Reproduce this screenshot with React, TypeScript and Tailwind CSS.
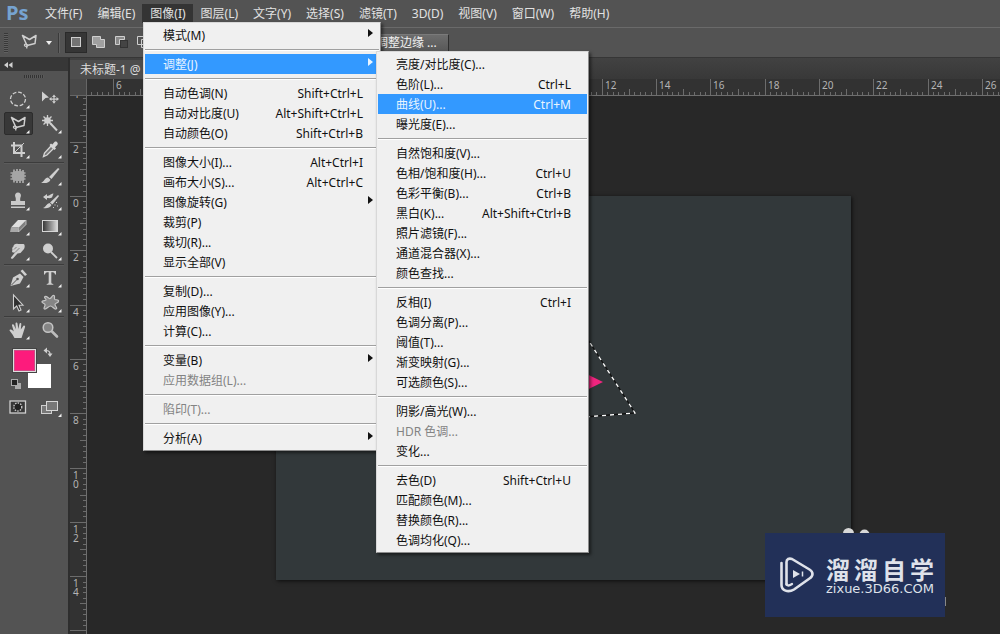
import React from "react";

type Entry =
  | { kind: "sep" }
  | { kind: "item"; label: string; keys?: string; sub?: boolean; active?: boolean; disabled?: boolean };

const sep: Entry = { kind: "sep" };
const item = (label: string, extra: Partial<Omit<Extract<Entry, { kind: "item" }>, "kind">> = {}): Entry => ({
  kind: "item",
  label,
  ...extra,
});

const imageMenu: Entry[] = [
  item("模式(M)", { sub: true }),
  sep,
  item("调整(J)", { sub: true, active: true }),
  sep,
  item("自动色调(N)", { keys: "Shift+Ctrl+L" }),
  item("自动对比度(U)", { keys: "Alt+Shift+Ctrl+L" }),
  item("自动颜色(O)", { keys: "Shift+Ctrl+B" }),
  sep,
  item("图像大小(I)...", { keys: "Alt+Ctrl+I" }),
  item("画布大小(S)...", { keys: "Alt+Ctrl+C" }),
  item("图像旋转(G)", { sub: true }),
  item("裁剪(P)"),
  item("裁切(R)..."),
  item("显示全部(V)"),
  sep,
  item("复制(D)..."),
  item("应用图像(Y)..."),
  item("计算(C)..."),
  sep,
  item("变量(B)", { sub: true }),
  item("应用数据组(L)...", { disabled: true }),
  sep,
  item("陷印(T)...", { disabled: true }),
  sep,
  item("分析(A)", { sub: true }),
];

const adjustMenu: Entry[] = [
  item("亮度/对比度(C)..."),
  item("色阶(L)...", { keys: "Ctrl+L" }),
  item("曲线(U)...", { keys: "Ctrl+M", active: true }),
  item("曝光度(E)..."),
  sep,
  item("自然饱和度(V)..."),
  item("色相/饱和度(H)...", { keys: "Ctrl+U" }),
  item("色彩平衡(B)...", { keys: "Ctrl+B" }),
  item("黑白(K)...", { keys: "Alt+Shift+Ctrl+B" }),
  item("照片滤镜(F)..."),
  item("通道混合器(X)..."),
  item("颜色查找..."),
  sep,
  item("反相(I)", { keys: "Ctrl+I" }),
  item("色调分离(P)..."),
  item("阈值(T)..."),
  item("渐变映射(G)..."),
  item("可选颜色(S)..."),
  sep,
  item("阴影/高光(W)..."),
  item("HDR 色调...", { disabled: true }),
  item("变化..."),
  sep,
  item("去色(D)", { keys: "Shift+Ctrl+U" }),
  item("匹配颜色(M)..."),
  item("替换颜色(R)..."),
  item("色调均化(Q)..."),
];

const topMenus = [
  "文件(F)", "编辑(E)", "图像(I)", "图层(L)", "文字(Y)", "选择(S)",
  "滤镜(T)", "3D(D)", "视图(V)", "窗口(W)", "帮助(H)",
];

function DropMenu({ entries, label, className }: { entries: Entry[]; label: string; className: string }) {
  return (
    <div
      role="menu"
      aria-label={label}
      className={`absolute flex flex-col border border-[#8c8c8c] border-t-[#d8d8d8] border-l-[#d8d8d8] bg-[#f0f0f0] px-px py-0.5 shadow-[2px_2px_3px_rgba(0,0,0,0.5)] ${className}`}
    >
      {entries.map((e, i) =>
        e.kind === "sep" ? (
          <div key={i} role="separator" className="flex h-[9px] items-center">
            <div className="h-0.5 w-full border-t border-[#a0a0a0] bg-white" />
          </div>
        ) : (
          <button
            key={i}
            role="menuitem"
            disabled={e.disabled}
            className={`flex h-5 shrink-0 items-center justify-between pt-0.5 pr-4 pl-[18px] text-left whitespace-nowrap ${
              e.active ? "bg-[#3399ff] text-[#e8f4ff]" : e.disabled ? "text-[#838383]" : "text-[#111111]"
            }`}
          >
            <span>{e.label}</span>
            {e.keys && <span>{e.keys}</span>}
            {e.sub && (
              <svg width="5" height="8" viewBox="0 0 5 8" className="-mr-2.5 mb-1.5" fill="currentColor">
                <path d="M0 0L5 4L0 8Z" />
              </svg>
            )}
          </button>
        ),
      )}
    </div>
  );
}

const LassoShape = () => (
  <g fill="none" stroke="#cfcfcf" strokeWidth="1.5" strokeLinejoin="round">
    <path d="M9.5 5.5L16.5 9.5L23 5.5L22 13.5L14 15.5Z" />
    <path d="M14 14.5C11.5 13 10.5 15.5 12.5 16.2C14.5 17 15.5 15 14 14.5M13.5 16.5L14 18.5" strokeWidth="1.2" />
  </g>
);

const icons: Record<string, React.ReactNode> = {
  marquee: <ellipse cx="16" cy="12" rx="7.5" ry="6.8" fill="none" stroke="#cfcfcf" strokeWidth="1.3" strokeDasharray="3.8 1.8" />,
  move: (
    <g fill="#cfcfcf">
      <path d="M8 4.500L15 10.500L11.500 11L8 14.500Z" />
      <path d="M20 7.500l2 2.500h-1.400v1.500h1.900v-1.400l2.500 2l-2.500 2v-1.400h-1.900v1.500h1.400l-2 2.500l-2-2.500h1.400v-1.500h-1.900v1.400l-2.500-2l2.500-2v1.400h1.900v-1.500h-1.400z" />
    </g>
  ),
  lasso: <LassoShape />,
  wand: (
    <g stroke="#cfcfcf">
      <path d="M13.500 3v11M8 8.500h11M9.500 4.500l8 8M17.500 4.500l-8 8" strokeWidth="1.300" />
      <circle cx="13.500" cy="8.500" r="3.300" fill="#cfcfcf" stroke="none" />
      <path d="M16 11L23 18.500" strokeWidth="2" />
    </g>
  ),
  crop: (
    <g fill="none" stroke="#cfcfcf" strokeWidth="2">
      <path d="M12 5v11h11M9 8.500h10.500V20" />
      <path d="M13 15L22 6" strokeWidth="1" />
    </g>
  ),
  dropper: (
    <g>
      <path d="M9.500 19.500L10.500 16L17 9L19.500 11.500L13 18Z" fill="#777" stroke="#d6d6d6" strokeWidth="1.300" />
      <path d="M15.500 8L17 6.500L18.300 7.500L20.500 5C22 3.500 25 6 23.300 8L21 10.300L22 11.500L20.500 13Z" fill="#d6d6d6" />
    </g>
  ),
  patch: (
    <g>
      <path d="M12 5.500v13M15 5v14M18 5v14M21 6v13M8.500 9h15M8.500 12h15.500M8.500 15h15" stroke="#cfcfcf" strokeWidth="1.200" />
      <rect x="10" y="7" width="12.500" height="10" rx="4" fill="#a5a5a5" />
    </g>
  ),
  brush: (
    <g fill="#cfcfcf">
      <path d="M24 4L25.500 5L17.500 15L15 13Z" />
      <path d="M14 13.500L16.500 15.700C15.500 19 11.500 19.500 7 18.800C10.500 17.500 10.500 14 14 13.500Z" />
    </g>
  ),
  stamp: (
    <path d="M16 3.500a3 3 0 0 1 2.800 4c-.6 1.500-.8 2.500-.5 4.500H23v4H9v-4h4.700c.3-2 .1-3-.5-4.500A3 3 0 0 1 16 3.500ZM9 17.500h14v1.500H9z" fill="#c9c9c9" />
  ),
  history: (
    <g fill="#cfcfcf">
      <path d="M24 6L25 7L18.500 15.500L16 13.500Z" />
      <path d="M15.500 14L17.500 16C16 19.500 12 19.500 9 19C12.500 17.500 12 15 15.500 14Z" />
      <path d="M9 8L13 5V7C16 6.500 17.500 4.500 19.500 4.500L18 8.500C16 9.500 14.500 9 13 9V11Z" />
      <path d="M22 13h1v1h-1zM20.500 15.500h1v1h-1zM23 16.500h1v1h-1zM19 18h1v1h-1z" />
    </g>
  ),
  eraser: (
    <g>
      <path d="M9 13.500L16 6H24L17 13.500Z" fill="#dedede" />
      <path d="M16.500 13.500L24 6V10.500L16.500 18Z" fill="#808080" stroke="#cfcfcf" strokeWidth="0.800" />
      <path d="M9 13.500H17L16 18H8Z" fill="#a8a8a8" />
    </g>
  ),
  gradient: <rect x="8.500" y="6.500" width="15" height="11" fill="url(#toolGrad)" stroke="#d6d6d6" />,
  smudge: (
    <g>
      <path d="M9 18.500L13 13.500C10 14 9.500 12.500 10.500 11C9.800 9.500 10.500 8 11.500 7.500C11.500 5.500 13.500 4.500 16 5H21.500C23 5.500 23 8 22 10L18.500 14L15.500 14.500L11 19.500C10 20 8.500 19.500 9 18.500Z" fill="#cfcfcf" />
      <path d="M13 13.500L17.500 9M12 10.500L14.500 8" stroke="#777" strokeWidth="0.900" />
    </g>
  ),
  dodge: (
    <g>
      <circle cx="14" cy="9.500" r="5" fill="#cfcfcf" />
      <path d="M17 13L23 19" stroke="#cfcfcf" strokeWidth="1.800" />
    </g>
  ),
  pen: (
    <g>
      <path d="M8.500 19.500L11 11.500L18 7.500L21.500 11L18 17.500L9.500 19.800Z" fill="#cfcfcf" />
      <path d="M18.500 5L20.500 3.500L25 8.500L23 10Z" fill="#cfcfcf" />
      <path d="M9.500 19L15 13.500" stroke="#555" />
      <circle cx="15.500" cy="13" r="1.300" fill="#555" />
    </g>
  ),
  type: <path d="M10 5H22V8.500H21C20.700 6.800 20 6.300 17.300 6.300V16C17.300 17.500 17.800 17.700 19.300 17.900V18.800H12.700V17.900C14.200 17.700 14.700 17.500 14.700 16V6.300C12 6.300 11.300 6.800 11 8.500H10Z" fill="#cfcfcf" />,
  arrow: <path d="M11.500 4V18L14.700 15L17 20L19 19L17 14.200H21Z" fill="#2f2f2f" stroke="#cfcfcf" strokeWidth="1.100" />,
  shape: <path d="M11 5.500C13 4.500 14.500 8 16 7.500C17.500 7 18 4 20 4.500C21.500 5 19.500 8 21 8.500C23 9 25 8.500 24.500 10.500C24 12 21 12 21 13.500C21 15 24 17.500 22 18C20 18.500 18.500 15 16.500 15C14.500 15 12.500 18.500 10.500 18C9 17.500 11.500 15 11 13.500C10.500 12 7.500 12.500 8 10.500C8.500 9 11.500 10 12 9C12.300 8 9.500 6.500 11 5.500Z" fill="#858585" stroke="#c6c6c6" strokeWidth="1.200" />,
  hand: (
    <path d="M12.500 20L10.500 16.500L7.500 12.500C7.500 11 9.500 11.300 11.800 13.500L10 7.500C9.800 6 11.500 5.700 12 7L13.800 11.200L13.500 5.500C13.500 4 15.300 4 15.500 5.500L16.300 11L17.500 5.700C17.800 4.400 19.500 4.700 19.300 6.200L18.800 11.500L21.300 8C22.300 7 23.500 8 23 9.200L21 15.500L19.500 20Z" fill="#cfcfcf" />
  ),
  zoom: (
    <g>
      <circle cx="14" cy="9.500" r="4.800" fill="#858585" stroke="#c4c4c4" strokeWidth="1.500" />
      <path d="M18 13.500L23 18.500" stroke="#bdbdbd" strokeWidth="2.600" strokeLinecap="round" />
    </g>
  ),
};

const toolGroups: { id: string; label: string }[][] = [
  [
    { id: "marquee", label: "椭圆选框工具" }, { id: "move", label: "移动工具" },
    { id: "lasso", label: "多边形套索工具" }, { id: "wand", label: "魔棒工具" },
    { id: "crop", label: "裁剪工具" }, { id: "dropper", label: "吸管工具" },
  ],
  [
    { id: "patch", label: "修补工具" }, { id: "brush", label: "画笔工具" },
    { id: "stamp", label: "图章工具" }, { id: "history", label: "历史画笔" },
    { id: "eraser", label: "橡皮擦" }, { id: "gradient", label: "渐变工具" },
    { id: "smudge", label: "涂抹工具" }, { id: "dodge", label: "减淡工具" },
  ],
  [
    { id: "pen", label: "钢笔工具" }, { id: "type", label: "文字工具" },
    { id: "arrow", label: "路径选择" }, { id: "shape", label: "自定形状" },
  ],
  [
    { id: "hand", label: "抓手工具" }, { id: "zoom", label: "缩放工具" },
  ],
];

function Toolbox() {
  return (
    <aside className="flex w-[70px] shrink-0 flex-col border-r-2 border-[#2e2e2e] bg-[#535353]">
      <button aria-label="折叠面板" className="flex h-[13px] items-center bg-[#373737] pl-1">
        <svg width="9" height="6" viewBox="0 0 9 6" fill="#d0d0d0">
          <path d="M4 0V6L0 3ZM8.500 0V6L4.500 3Z" />
        </svg>
      </button>
      <div className="flex h-4 items-start justify-center pt-1">
        <div className="h-[3px] w-5 bg-[repeating-linear-gradient(90deg,#333_0_1px,#5a5a5a_1px_2px)]" />
      </div>
      {toolGroups.map((group, g) => (
        <div key={g} className="flex flex-col">
          {g > 0 && <div className="mx-1 h-0.5 border-t border-[#3c3c3c] bg-[#5c5c5c]" />}
          <div className="grid grid-cols-[32px_32px] pl-0.5">
            {group.map((t) => (
              <button key={t.id} aria-label={t.label} className="flex h-[25px] items-center justify-center">
                <svg width="32" height="25" viewBox="0 0 32 25">
                  {t.id === "lasso" && <rect x="2.500" y="0.500" width="28" height="22" rx="1.500" fill="#383838" stroke="#2c2c2c" />}
                  {icons[t.id]}
                  {t.id !== "move" && t.id !== "zoom" && <path d="M27.500 18V21.500H24Z" fill="#f0f0f0" />}
                </svg>
              </button>
            ))}
          </div>
        </div>
      ))}
      <svg width="66" height="82" viewBox="0 342 66 82" role="img" aria-label="前景色和背景色">
        <rect x="28" y="363" width="23" height="24" fill="#fff" />
        <rect x="12.500" y="347.500" width="24" height="24" fill="#ddd" stroke="#444" />
        <rect x="14.500" y="349.500" width="20" height="20" fill="#fd1b7c" stroke="#d04a85" />
        <g fill="#cfcfcf">
          <path d="M43.500 349.500L47 346.500V352.500Z M50 356L47.500 352.500H52.500Z" />
          <path d="M46 349.500C49 349.500 50 350.500 50 353" fill="none" stroke="#cfcfcf" strokeWidth="1.200" />
        </g>
        <rect x="15" y="382" width="6" height="6" fill="#aaa" />
        <rect x="11.500" y="378.500" width="6" height="6" fill="#222" stroke="#aaa" />
        <rect x="10" y="400" width="15.500" height="12" fill="#383838" stroke="#cfcfcf" strokeWidth="1.300" />
        <circle cx="17.800" cy="406" r="4" fill="#222" stroke="#cfcfcf" strokeWidth="1.300" strokeDasharray="1.500 1.100" />
        <rect x="41.500" y="404.500" width="10" height="8" fill="#777" stroke="#cfcfcf" />
        <rect x="46.500" y="400.500" width="11" height="9" fill="#777" stroke="#d6d6d6" />
        <path d="M61.500 412.500V416H58Z" fill="#f0f0f0" />
      </svg>
    </aside>
  );
}

/* Ruler scale: pixels for every two units. */
const STEP = 54.3;
const at = (zero: number, i: number) => Math.round(zero + (i * STEP) / 10);

const topLabels = [-6, 12, 14, 16, 18, 20, 22, 24, 26];
const sideLabels = [-4, -2, 0, 2, 4, 6, 8, 10, 12, 14];

function TopRuler() {
  const zero = 189;
  const ticks = Array.from({ length: 400 }, (_, i) => i - 40);
  return (
    <div className="h-[17px] min-w-0 flex-1 overflow-hidden border-b border-[#6e6e6e] bg-[#323232]">
      <svg width="2000" height="16">
        {ticks.map((i) => {
          const h = i % 10 === 0 ? 16 : i % 5 === 0 ? 6 : 3;
          return <rect key={i} x={at(zero, i)} y={16 - h} width="1" height={h} fill="#6c6c6c" />;
        })}
        {topLabels.map((n) => (
          <text key={n} x={at(zero, n * 5) + 3} y="10" fontSize="10" fill="#b4b4b4">
            {Math.abs(n)}
          </text>
        ))}
      </svg>
    </div>
  );
}

function SideRuler() {
  const zero = 100;
  const ticks = Array.from({ length: 300 }, (_, i) => i - 20);
  return (
    <div className="w-[17px] shrink-0 overflow-hidden border-r border-[#6e6e6e] bg-[#323232]">
      <svg width="16" height="1500">
        {ticks.map((i) => {
          const w = i % 10 === 0 ? 16 : i % 5 === 0 ? 6 : 3;
          return <rect key={i} x={16 - w} y={at(zero, i)} width={w} height="1" fill="#6c6c6c" />;
        })}
        {sideLabels.flatMap((n) =>
          String(Math.abs(n)).split("").map((d, k) => (
            <text key={`${n}-${k}`} x="3" y={at(zero, n * 5) + 11 + k * 9} fontSize="10" fill="#b4b4b4">
              {d}
            </text>
          )),
        )}
      </svg>
    </div>
  );
}

function OptionsBar() {
  const modes = [
    { label: "新选区", art: <rect x="5.500" y="4.500" width="9" height="9" fill="#747474" stroke="#cfcfcf" /> },
    {
      label: "添加到选区",
      art: <path d="M4.500 3.500H12.500V6.500H16.500V14.500H8.500V11.500H4.500Z" fill="#a0a0a0" stroke="#cfcfcf" />,
    },
    {
      label: "从选区减去",
      art: (
        <g>
          <path d="M5.500 3.500H14.500V6.500H9.500V11.500H5.500Z" fill="#8a8a8a" stroke="#cfcfcf" />
          <rect x="10.500" y="7.500" width="7" height="7" fill="#444" stroke="#333" />
        </g>
      ),
    },
    {
      label: "与选区交叉",
      art: <path d="M5.500 3.500H13.500V11.500H5.500ZM9.500 6.500H17.500V14.500H9.500Z" fill="none" stroke="#cfcfcf" />,
    },
  ];
  return (
    <div className="flex h-[31px] shrink-0 items-center border-t border-[#6a6a6a] border-b border-b-[#363636] bg-[#535353] pl-1">
      <div className="h-5 w-1 bg-[repeating-linear-gradient(180deg,#383838_0_1px,#606060_1px_2px)]" />
      <button aria-label="工具预设" className="ml-px flex items-center">
        <svg width="32" height="25" viewBox="-4 0 32 25"><LassoShape /></svg>
        <svg width="17" height="6" viewBox="0 0 17 6"><path d="M5 1H11L8 5Z" fill="#eee" /></svg>
      </button>
      <div className="h-5 w-0.5 border-l border-[#3a3a3a] bg-[#626262]" />
      <div className="ml-[5px] flex">
        {modes.map((m, i) => (
          <button key={m.label} aria-label={m.label} className={i === 0 ? "border border-[#2a2a2a] bg-[#363636]" : "border border-transparent"}>
            <svg width="20" height="19" viewBox="0 0 20 19">{m.art}</svg>
          </button>
        ))}
      </div>
      <button className="ml-[214px] h-[18px] border border-[#2e2e2e] border-t-[#7a7a7a] bg-linear-to-b from-[#6d6d6d] to-[#585858] pr-[11px] pl-2 leading-4 whitespace-nowrap text-[#f0f0f0]">
        调整边缘 ...
      </button>
    </div>
  );
}

export default function App() {
  return (
    <div className="relative flex h-screen flex-col overflow-hidden bg-[#282828] font-['Noto_Sans','Noto_Sans_CJK_SC',sans-serif] text-xs">
      <svg width="0" height="0" className="absolute">
        <linearGradient id="toolGrad">
          <stop offset="0" stopColor="#333" />
          <stop offset="1" stopColor="#ddd" />
        </linearGradient>
      </svg>

      <nav aria-label="主菜单" className="flex h-[27px] shrink-0 items-center bg-[#535353]">
        <span className="w-[37px] pb-0.5 pl-1.5 font-['Open_Sans','Noto_Sans',sans-serif] text-xl leading-6 font-bold text-[#76a3d0]">Ps</span>
        {topMenus.map((m, i) => (
          <button
            key={m}
            className={`h-[19px] pr-[7px] pl-2 leading-[19px] whitespace-nowrap text-[#e2e2e2] ${i === 2 ? "bg-[#343434]" : ""}`}
          >
            {m}
          </button>
        ))}
      </nav>

      <OptionsBar />

      <div className="flex min-h-0 flex-1">
        <Toolbox />
        <main className="flex min-w-0 flex-1 flex-col">
          <div className="flex h-[21px] shrink-0 bg-linear-to-b from-[#424242] to-[#383838] pt-0.5">
            <button className="bg-[#4d4d4d] pt-px pr-40 pl-2.5 leading-[18px] whitespace-nowrap text-[#dddddd]">未标题-1 @</button>
          </div>
          <div className="flex shrink-0">
            <div className="w-[17px] border-r border-b border-[#666666] bg-[#484848]" />
            <TopRuler />
          </div>
          <div className="flex min-h-0 flex-1">
            <SideRuler />
            <section aria-label="画布" className="relative min-w-0 flex-1 overflow-hidden bg-[#282828]">
              <div className="absolute top-[100px] left-[189px] h-[384px] w-[575px] bg-[#32383a] shadow-[1px_1px_4px_rgba(0,0,0,0.7)]">
                <svg width="575" height="384" viewBox="276 196 575 384">
                  <path d="M560 361L603 382L560 403Z" fill="#f0257f" />
                  <path d="M560 296L635 413L560 419" fill="none" stroke="#111" strokeWidth="1.300" />
                  <path d="M560 296L635 413L560 419" fill="none" stroke="#fff" strokeWidth="1.300" strokeDasharray="4 4" />
                </svg>
              </div>
            </section>
          </div>
        </main>
      </div>

      <div className="absolute top-[528px] left-[765px]">
        <svg width="181" height="80" viewBox="0 0 181 80" className="absolute top-0 left-0">
          <circle cx="83.500" cy="5.500" r="5.500" fill="#d8d8d8" />
          <circle cx="99.500" cy="6.500" r="5" fill="#d8d8d8" />
          <path d="M180.500 69V78" stroke="#888" />
        </svg>
        <div className="relative mt-[5px] flex h-[84px] w-[180px] items-center gap-3 bg-[#223058] pl-[15px] text-[#dfe2ea]">
          <svg width="34" height="36" viewBox="0 0 34 36" fill="none" stroke="#dfe2ea" strokeLinecap="round" strokeLinejoin="round" className="shrink-0">
            <path d="M6.500 27.500V5C6.500 2 9 1 12 2L29.500 12.500C33.500 15 33.500 19 29.500 21.500L14 32.500C8 36 1.500 33.500 1.500 28V6" strokeWidth="2.600" />
            <path d="M6.500 27C7 29 9 29 12 27" strokeWidth="2.300" />
            <path d="M13 13V21L20 17Z" fill="#dfe2ea" stroke="none" />
            <path d="M22.500 14.500V19.500" strokeWidth="1.500" strokeLinecap="butt" />
          </svg>
          <div className="flex flex-col whitespace-nowrap">
            <span className="flex gap-1 font-['Noto_Sans_CJK_SC',sans-serif] text-2xl leading-7 font-bold">
              {"溜溜自学".split("").map((c, i) => (
                <span key={i}>{c}</span>
              ))}
            </span>
            <span className="font-['DejaVu_Sans',sans-serif] text-[13px] leading-3">zixue.3D66.COM</span>
          </div>
        </div>
      </div>

      <DropMenu entries={imageMenu} label="图像" className="top-[22px] left-[143px] w-[238px]" />
      <DropMenu entries={adjustMenu} label="调整" className="top-[51px] left-[376px] w-[213px]" />
    </div>
  );
}
